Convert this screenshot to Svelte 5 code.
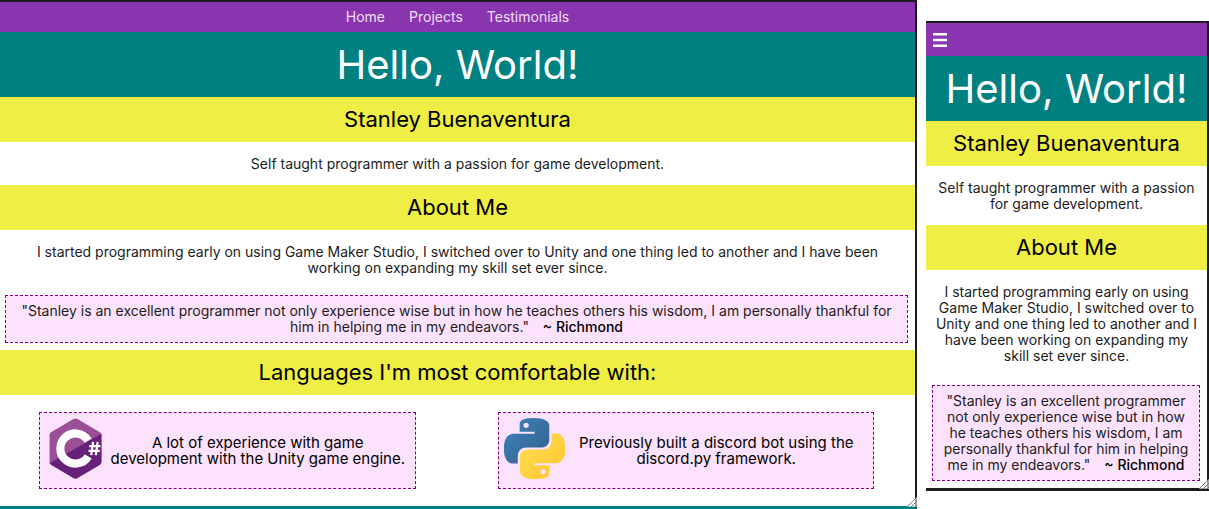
<script>
  const links = ['Home', 'Projects', 'Testimonials'];
  const tagline = 'Self taught programmer with a passion for game development.';
  const about =
    'I started programming early on using Game Maker Studio, I switched over to Unity and one thing led to another and I have been working on expanding my skill set ever since.';
  const quote =
    '"Stanley is an excellent programmer not only experience wise but in how he teaches others his wisdom, I am personally thankful for him in helping me in my endeavors."';
</script>

{#snippet intro()}
  <h1>Hello, World!</h1>
  <h2>Stanley Buenaventura</h2>
  <p class="copy">{tagline}</p>
  <h2>About Me</h2>
  <p class="copy">{about}</p>
  <blockquote>{quote} <cite>~ Richmond</cite></blockquote>
{/snippet}

{#snippet grip()}
  <svg class="grip" viewBox="0 0 10 10" aria-hidden="true">
    <path d="M0 10L10 0V10Z" fill="#fff" opacity=".6" />
    <path d="M0 10L10 0M4 10L10 4M8 10L10 8" stroke="#777" fill="none" />
  </svg>
{/snippet}

<main>
  <section class="page desktop">
    <nav>
      {#each links as link}
        <a href="#{link.toLowerCase()}">{link}</a>
      {/each}
    </nav>
    {@render intro()}
    <h2>Languages I'm most comfortable with:</h2>
    <div class="cards">
      <article>
        <svg viewBox="0 0 60 60" aria-hidden="true">
          <path d="M28 1Q30 0 32 1L54 14Q55.5 15 55.5 17V43Q55.5 45 54 46L32 59Q30 60 28 59L6 46Q4.500 45 4.500 43V17Q4.500 15 6 14Z" fill="#9b4f96" />
          <path d="M55.500 15.500V43Q55.500 45 54 46L32 59Q30 60 28 59L6 46L4.500 44.500Z" fill="#68217a" />
          <path d="M42.500 22.300A14.800 14.800 0 1 0 42.500 37.700" fill="none" stroke="#fff" stroke-width="8" />
          <path d="M47.300 23.500L45.500 36.500M51.800 23.500L50 36.500M43.500 27.700H54.500M42.800 32.300H53.800" fill="none" stroke="#fff" stroke-width="2.200" />
        </svg>
        <p>A lot of experience with game development with the Unity game engine.</p>
      </article>
      <article>
        <svg viewBox="0 0 24 24" aria-hidden="true">
          <defs>
            <linearGradient id="blue" x1="0" y1="0" x2="1" y2="1">
              <stop offset="0" stop-color="#3c83bd" />
              <stop offset="1" stop-color="#36608a" />
            </linearGradient>
            <linearGradient id="gold" x1="0" y1="0" x2="1" y2="1">
              <stop offset="0" stop-color="#ffe052" />
              <stop offset="1" stop-color="#ffc331" />
            </linearGradient>
          </defs>
          <path fill="url(#blue)" d="M14.25.18l.9.2.73.26.59.3.45.32.34.34.25.34.16.33.1.3.04.26.02.2-.01.13V8.5l-.05.63-.13.55-.21.46-.26.38-.3.31-.33.25-.35.19-.35.14-.33.1-.3.07-.26.04-.21.02H8.77l-.69.05-.59.14-.5.22-.41.27-.33.32-.27.35-.2.36-.15.37-.1.35-.07.32-.04.27-.02.21v3.06H3.17l-.21-.03-.28-.07-.32-.12-.35-.18-.36-.26-.36-.36-.35-.46-.32-.59-.28-.73-.21-.88-.14-1.05-.05-1.23.06-1.22.16-1.04.24-.87.32-.71.36-.57.4-.44.42-.33.42-.24.4-.16.36-.1.32-.05.24-.01h.16l.06.01h8.16v-.83H6.18l-.01-2.75-.02-.37.05-.34.11-.31.17-.28.25-.26.31-.23.38-.2.44-.18.51-.15.58-.12.64-.1.71-.06.77-.04.84-.02 1.27.05zm-6.3 1.98l-.23.33-.08.41.08.41.23.34.33.22.41.09.41-.09.33-.22.23-.34.08-.41-.08-.41-.23-.33-.33-.22-.41-.09-.41.09z" />
          <path fill="url(#gold)" d="M21.1 6.11l.28.06.32.12.35.18.36.27.36.35.35.47.32.59.28.73.21.88.14 1.04.05 1.23-.06 1.23-.16 1.04-.24.86-.32.71-.36.57-.4.45-.42.33-.42.24-.4.16-.36.09-.32.05-.24.02-.16-.01h-8.22v.82h5.84l.01 2.76.02.36-.05.34-.11.31-.17.29-.25.25-.31.24-.38.2-.44.17-.51.15-.58.13-.64.09-.71.07-.77.04-.84.01-1.27-.04-1.07-.14-.9-.2-.73-.25-.59-.3-.45-.33-.34-.34-.25-.34-.16-.33-.1-.3-.04-.25-.02-.2.01-.13v-5.34l.05-.64.13-.54.21-.46.26-.38.3-.32.33-.24.35-.2.35-.14.33-.1.3-.06.26-.04.21-.02.13-.01h5.84l.69-.05.59-.14.5-.21.41-.28.33-.32.27-.35.2-.36.15-.36.1-.35.07-.32.04-.28.02-.21V6.07h2.09l.14.01zm-6.47 14.25l-.23.33-.08.41.08.41.23.33.33.23.41.08.41-.08.33-.23.23-.33.08-.41-.08-.41-.23-.33-.33-.23-.41-.08-.41.08z" />
        </svg>
        <p>Previously built a discord bot using the discord.py framework.</p>
      </article>
    </div>
    {@render grip()}
  </section>

  <section class="page mobile">
    <nav>
      <button type="button" aria-label="Menu">
        <svg viewBox="0 0 14 14" aria-hidden="true">
          <path d="M0 0H14V2.500H0ZM0 5.700H14V8.200H0ZM0 11.500H14V14H0Z" fill="#fff" />
        </svg>
      </button>
    </nav>
    {@render intro()}
    {@render grip()}
  </section>
</main>

<style>
  :global(body) {
    margin: 0;
    background: #fff;
  }
  main {
    display: grid;
    grid-template-columns: 917fr 283fr;
    gap: 9px;
    align-items: start;
    font: 14px/16px Inter, 'Liberation Sans', sans-serif;
    color: #1c1c1c;
    text-align: center;
  }
  .page {
    position: relative;
    min-width: 0;
    border: solid #1c1c1e;
    border-width: 2px 2px 0 0;
  }
  .desktop {
    border-bottom: 3px solid #008080;
  }
  .mobile {
    margin-top: 21px;
    border-bottom-width: 3px;
  }
  nav {
    display: flex;
    align-items: center;
    justify-content: center;
    gap: 24px;
    height: 30px;
    background: #8a35b0;
  }
  nav a {
    color: #f0def5;
    text-decoration: none;
  }
  .mobile nav {
    justify-content: flex-start;
    height: 33px;
    padding-left: 7px;
  }
  button {
    display: flex;
    padding: 0;
    border: 0;
    background: none;
    cursor: pointer;
  }
  button svg {
    width: 14px;
    height: 14px;
  }
  h1 {
    margin: 0;
    padding: 8px 0;
    background: #008080;
    color: #fff;
    font-size: 40px;
    font-weight: 400;
    line-height: 49px;
  }
  h2 {
    margin: 0;
    padding: 9px 0;
    background: #eeee44;
    color: #000;
    font-size: 22px;
    font-weight: 400;
    line-height: 27px;
  }
  .copy {
    margin: 0;
    padding: 14px 5px 13px;
  }
  .desktop .copy {
    padding-inline: 14px;
  }
  blockquote {
    margin: 6px 7px 7px 5px;
    padding: 7px;
    border: 1px dashed #800080;
    background: #fce2fc;
  }
  .mobile blockquote {
    margin: 8px 7px 7px 6px;
  }
  cite {
    margin-left: 10px;
    color: #000;
    font-style: normal;
    font-weight: 500;
    white-space: nowrap;
  }
  .cards {
    display: flex;
    gap: 82px;
    padding: 17px 41px 17px 39px;
  }
  article {
    display: flex;
    flex: 1;
    align-items: center;
    box-sizing: border-box;
    min-height: 77px;
    padding: 5px;
    border: 1px dashed #800080;
    background: #fce2fc;
    color: #000;
    font-size: 15px;
  }
  article svg {
    flex: none;
    align-self: flex-start;
    width: 61px;
    height: 61px;
  }
  article p {
    flex: 1;
    margin: 0;
  }
  .grip {
    position: absolute;
    right: -2px;
    bottom: -1px;
    width: 10px;
    height: 10px;
  }
</style>
